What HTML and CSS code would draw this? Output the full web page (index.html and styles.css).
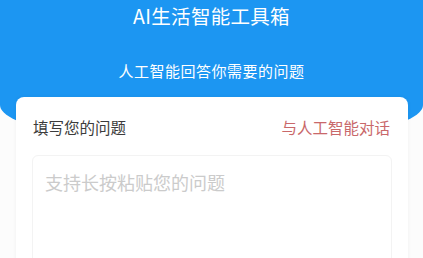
FILE: index.html
```html
<!DOCTYPE html>
<html lang="zh-CN">
<head>
<meta charset="utf-8">
<title>AI生活智能工具箱</title>
<link rel="stylesheet" href="styles.css">
</head>
<body>
<div class="page">
  <header class="hero">
    <h1 class="hero-title">AI生活智能工具箱</h1>
    <p class="hero-sub">人工智能回答你需要的问题</p>
  </header>
  <section class="card">
    <div class="card-head">
      <span class="card-label">填写您的问题</span>
      <span class="card-link">与人工智能对话</span>
    </div>
    <div class="question-box">
      <span class="placeholder">支持长按粘贴您的问题</span>
    </div>
  </section>
</div>
</body>
</html>
```
FILE: styles.css
```css
html, body {
  margin: 0;
  padding: 0;
  background: #fcfcfc;
  font-family: "Noto Sans CJK SC", "Noto Sans", sans-serif;
  overflow: hidden;
}
.page {
  width: 423px;
  height: 258px;
  overflow: hidden;
}
.hero {
  height: 145px;
  background: #1c96f2;
  border-bottom-left-radius: 50% 40px;
  border-bottom-right-radius: 50% 40px;
  color: #fff;
  text-align: center;
  padding-top: 2px;
  box-sizing: border-box;
}
.hero-title {
  margin: 0;
  font-size: 19.5px;
  line-height: 28px;
  font-weight: 400;
  letter-spacing: 0.3px;
}
.hero-sub {
  margin: 31px 0 0;
  font-size: 15px;
  line-height: 20px;
  font-weight: 400;
  letter-spacing: 0.5px;
}
.card {
  margin: -48px 15px 0 16px;
  background: #fff;
  border-radius: 8px;
  box-shadow: 0 0 4px rgba(0, 0, 0, 0.05);
  padding: 20px 16px 0 16px;
  height: 200px;
}
.card-head {
  display: flex;
  justify-content: space-between;
  align-items: center;
  padding: 0 2px 0 1px;
  line-height: 20px;
}
.card-label {
  font-size: 15.5px;
  color: #3c3c3c;
}
.card-link {
  font-size: 15.5px;
  color: #c9686a;
}
.question-box {
  margin-top: 18px;
  border: 1px solid #f3f3f3;
  border-radius: 6px;
  padding: 14px 12px 0;
  height: 120px;
}
.placeholder {
  font-size: 18px;
  line-height: 24px;
  color: #cbcbcb;
}
```
